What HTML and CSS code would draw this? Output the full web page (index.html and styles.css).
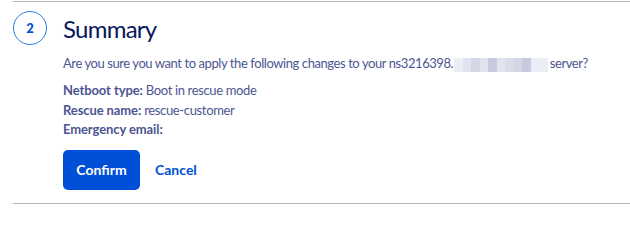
FILE: index.html
```html
<!DOCTYPE html>
<html lang="en">
<head>
<meta charset="utf-8">
<title>Summary</title>
<link rel="stylesheet" href="styles.css">
</head>
<body>
<section class="step">
  <div class="step-badge"><span>2</span></div>
  <div class="step-body">
    <h2 class="step-title">Summary</h2>
    <p class="question">Are you sure you want to apply the following changes to your ns3216398.<span class="masked"><i class="c1"></i><i class="c2"></i><i class="c3"></i><i class="c2"></i><i class="c4"></i><i class="c2"></i><i class="c5"></i><i class="c3"></i><i class="c4"></i><i class="c1"></i><i class="c1"></i></span>server?</p>
    <ul class="details">
      <li><b>Netboot type:</b> Boot in rescue mode</li>
      <li><b>Rescue name:</b> rescue-customer</li>
      <li><b>Emergency email:</b></li>
    </ul>
    <div class="actions">
      <button class="btn-primary" type="button">Confirm</button>
      <button class="btn-link" type="button">Cancel</button>
    </div>
  </div>
</section>
</body>
</html>
```
FILE: styles.css
```css
html, body {
  margin: 0;
  padding: 0;
  background: #fff;
}
body {
  font-family: Lato, "Noto Sans", sans-serif;
  color: #4d5592;
}
.step {
  margin: 1px 0 0 13px;
  border-top: 1px solid #b7b7b7;
  border-bottom: 1px solid #b7b7b7;
  height: 203px;
  box-sizing: border-box;
  display: flex;
  align-items: flex-start;
  gap: 16px;
  padding-top: 9px;
}
.step-badge {
  width: 34px;
  height: 34px;
  box-sizing: border-box;
  border: 1.5px solid #2e7be6;
  border-radius: 50%;
  display: flex;
  align-items: center;
  justify-content: center;
  flex: none;
  color: #0050d7;
  font-weight: 900;
  font-size: 13px;
}
.step-body {
  display: flex;
  flex-direction: column;
  align-items: flex-start;
}
.step-title {
  margin: 3.4px 0 0;
  font-weight: 400;
  font-size: 24px;
  line-height: 30px;
  letter-spacing: -0.75px;
  color: #0a175c;
}
.question {
  margin: 8.6px 0 0;
  font-size: 13px;
  line-height: 20px;
  letter-spacing: -0.42px;
  white-space: nowrap;
}
.masked {
  display: inline-flex;
  vertical-align: -4px;
  height: 14px;
  margin: 0 2px 0 1px;
}
.masked i {
  width: 8.5px;
  height: 14px;
  display: block;
}
.c1 { background: #eceef5; }
.c2 { background: #e1e3ee; }
.c3 { background: #d4d6e6; }
.c4 { background: #c8cbe0; }
.c5 { background: #dadcea; }
.details {
  list-style: none;
  margin: 8.5px 0 0;
  padding: 0;
  font-size: 13px;
  line-height: 19.5px;
  letter-spacing: -0.35px;
}
.details b {
  font-weight: 700;
  letter-spacing: -0.1px;
}
.actions {
  margin-top: 10px;
  display: flex;
  align-items: center;
  gap: 15px;
}
.btn-primary {
  font-family: inherit;
  font-size: 14px;
  font-weight: 700;
  color: #fff;
  background: #0050d7;
  border: none;
  border-radius: 5px;
  width: 77px;
  height: 40px;
  padding: 0;
}
.btn-link {
  font-family: inherit;
  font-size: 14px;
  font-weight: 700;
  color: #0050d7;
  background: none;
  border: none;
  padding: 0;
}
```
